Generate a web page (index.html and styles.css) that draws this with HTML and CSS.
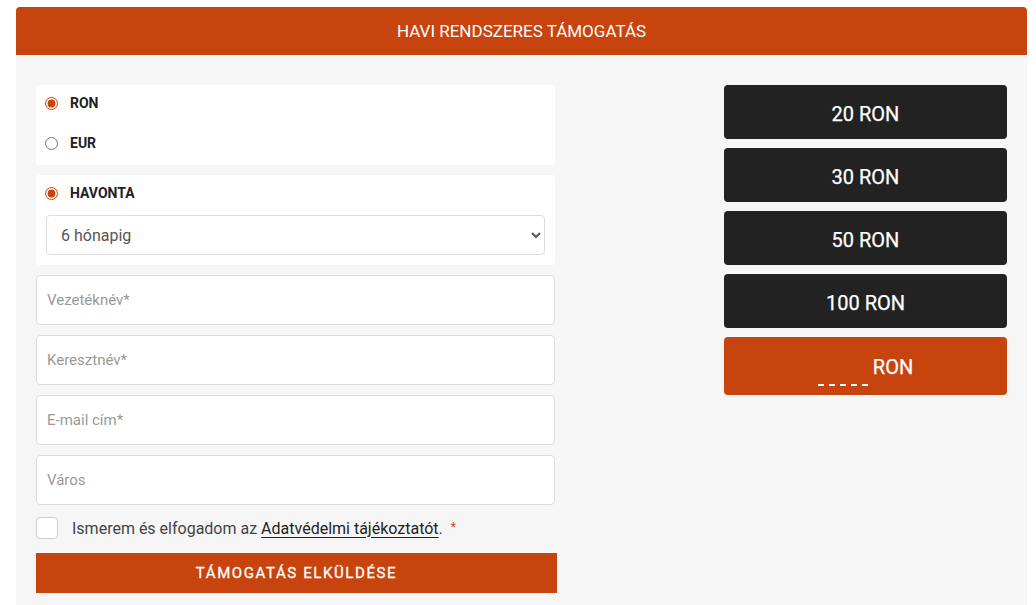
FILE: index.html
```html
<!DOCTYPE html>
<html lang="hu">
<head>
    <meta charset="UTF-8">
    <meta name="viewport" content="width=device-width, initial-scale=1.0">
    <title>Havi rendszeres támogatás</title>
    <link rel="stylesheet" href="styles.css">
</head>
<body>
    <div class="donate">
        <div class="donate-head">HAVI RENDSZERES TÁMOGATÁS</div>
        <div class="donate-body">
            <form class="donate-form">
                <div class="card">
                    <label class="radio-row">
                        <input type="radio" name="currency" value="RON" checked>
                        <span>RON</span>
                    </label>
                    <label class="radio-row">
                        <input type="radio" name="currency" value="EUR">
                        <span>EUR</span>
                    </label>
                </div>
                <div class="card">
                    <label class="radio-row">
                        <input type="radio" name="period" value="monthly" checked>
                        <span>HAVONTA</span>
                    </label>
                    <select class="period-select">
                        <option>6 hónapig</option>
                        <option>12 hónapig</option>
                        <option>Visszavonásig</option>
                    </select>
                </div>
                <input class="text-input" type="text" placeholder="Vezetéknév*">
                <input class="text-input" type="text" placeholder="Keresztnév*">
                <input class="text-input" type="email" placeholder="E-mail cím*">
                <input class="text-input" type="text" placeholder="Város">
                <label class="consent">
                    <input type="checkbox">
                    <span>Ismerem és elfogadom az <a href="#">Adatvédelmi tájékoztatót</a>. <span class="required">*</span></span>
                </label>
                <button type="submit" class="submit">TÁMOGATÁS ELKÜLDÉSE</button>
            </form>

            <div class="amounts">
                <button type="button" class="amount">20 RON</button>
                <button type="button" class="amount">30 RON</button>
                <button type="button" class="amount">50 RON</button>
                <button type="button" class="amount">100 RON</button>
                <div class="amount custom">
                    <input type="text" class="custom-input">
                    <span>RON</span>
                </div>
            </div>
        </div>
    </div>
</body>
</html>
```

FILE: styles.css
```css
body {
    font-family: Roboto, "Liberation Sans", Arial, sans-serif;
    margin: 0;
    padding: 0;
    background-color: #fff;
    color: #333;
}
.donate {
    margin: 7px 9px 0 16px;
}
.donate-head {
    background-color: #c8440e;
    color: #fff;
    height: 48px;
    display: flex;
    align-items: center;
    justify-content: center;
    font-size: 17px;
    border-radius: 4px 4px 0 0;
}
.donate-body {
    background-color: #f6f6f6;
    padding: 30px 20px 20px 20px;
    display: flex;
    justify-content: space-between;
    align-items: flex-start;
}
.donate-form {
    width: 521px;
    display: flex;
    flex-direction: column;
    gap: 10px;
}
.card {
    width: 519px;
    box-sizing: border-box;
    background: #fff;
    border-radius: 3px;
    padding: 4px 10px 10px 9px;
    display: flex;
    flex-direction: column;
}
.card:first-child {
    gap: 12px;
    padding-bottom: 8px;
}
.radio-row {
    display: flex;
    align-items: center;
    height: 28px;
    font-size: 14px;
    font-weight: 700;
    color: #222;
    gap: 12px;
    cursor: pointer;
}
.radio-row input {
    margin: 0;
    width: 13px;
    height: 13px;
    accent-color: #c8440e;
}
.period-select {
    margin: 8px 0 0 1px;
    height: 40px;
    border: 1px solid #ddd;
    border-radius: 4px;
    background: #fff;
    font-family: Roboto, "Liberation Sans", Arial, sans-serif;
    font-size: 16px;
    color: #555;
    padding: 0 8px 0 10px;
}
.text-input {
    width: 519px;
    height: 50px;
    box-sizing: border-box;
    border: 1px solid #ddd;
    border-radius: 4px;
    padding: 0 10px;
    font-family: Roboto, "Liberation Sans", Arial, sans-serif;
    font-size: 15px;
    color: #333;
    background: #fff;
}
.text-input::placeholder {
    color: #999;
}
.consent {
    display: flex;
    align-items: center;
    gap: 14px;
    margin-top: 2px;
    font-size: 16px;
    color: #444;
}
.consent input {
    appearance: none;
    margin: 0;
    width: 22px;
    height: 22px;
    border: 1px solid #ccc;
    border-radius: 4px;
    background: #fff;
}
.consent a {
    color: #222;
    text-decoration: underline;
    text-underline-offset: 3px;
}
.required {
    color: #e2401c;
    font-size: 12px;
    vertical-align: 3px;
    margin-left: 4px;
}
.submit {
    margin-top: 4px;
    height: 40px;
    width: 100%;
    border: none;
    background-color: #c8440e;
    color: #fff;
    font-family: Roboto, "Liberation Sans", Arial, sans-serif;
    font-size: 15px;
    font-weight: 400;
    letter-spacing: 1.6px;
    -webkit-text-stroke: 0.3px #fff;
    cursor: pointer;
}
.amounts {
    width: 283px;
    display: flex;
    flex-direction: column;
    gap: 9px;
}
.amount {
    height: 54px;
    padding-top: 5px;
    border: none;
    border-radius: 4px;
    background-color: #222;
    color: #fff;
    font-family: Roboto, "Liberation Sans", Arial, sans-serif;
    font-size: 20px;
    font-weight: 400;
    -webkit-text-stroke: 0.25px #fff;
    cursor: pointer;
}
.amount.custom {
    height: 58px;
    padding-top: 2px;
    box-sizing: border-box;
    background-color: #c8440e;
    display: flex;
    align-items: center;
    justify-content: center;
    gap: 5px;
}
.custom-input {
    width: 50px;
    height: 38px;
    box-sizing: border-box;
    border: none;
    border-bottom: 2px dashed #fff;
    background: transparent;
    color: #fff;
    font-size: 19px;
    padding: 0;
    outline: none;
}
```
